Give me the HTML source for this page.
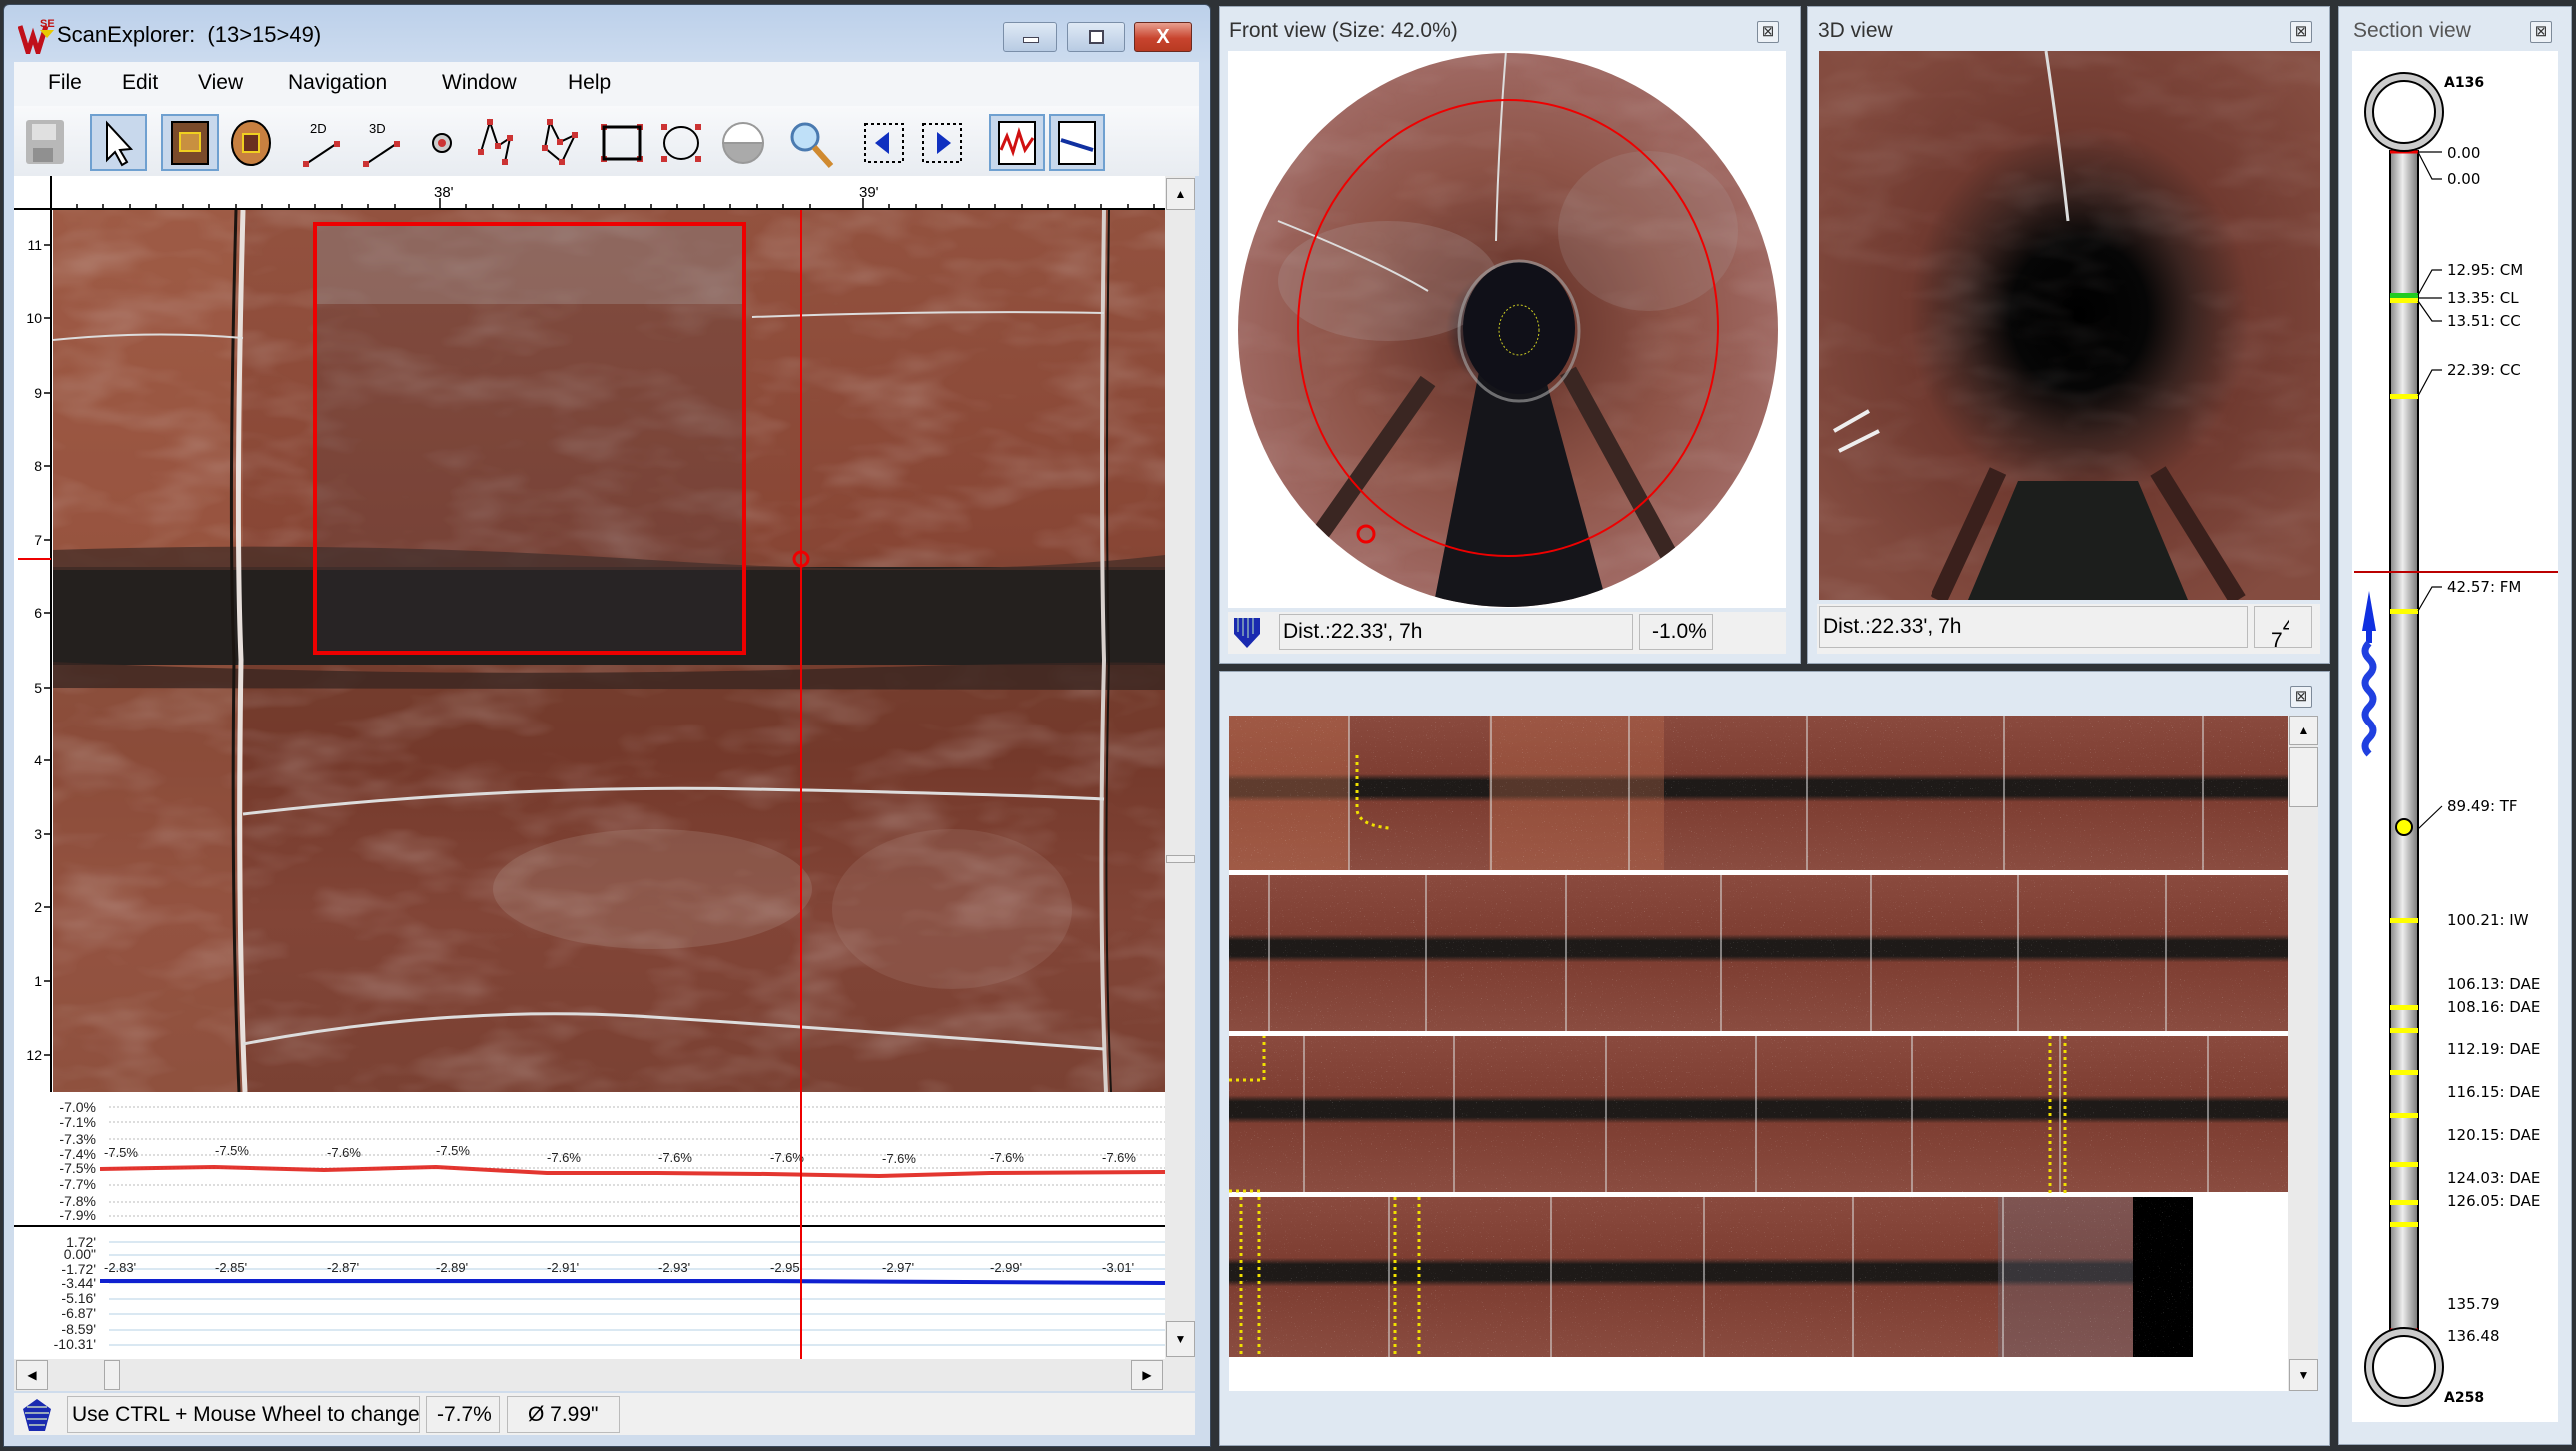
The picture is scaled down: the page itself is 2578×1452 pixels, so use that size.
<!DOCTYPE html>
<html><head><meta charset="utf-8">
<style>
*{margin:0;padding:0;box-sizing:border-box}
body{width:2578px;height:1452px;background:#2e3236;position:relative;overflow:hidden;font-family:"Liberation Sans",sans-serif}
.a{position:absolute}
.t{font-family:"Liberation Sans",sans-serif;color:#000}
.btn{position:absolute;border:1px solid #7a8ea8;border-radius:3px}
.pan{background:#dfe8f2;border:1px solid #9aa8b8}
.x{position:absolute;width:22px;height:22px;border:1px solid #7d8a99;border-radius:2px;background:#eef2f7;font-size:15px;line-height:19px;text-align:center;color:#333}
.sb{position:absolute;background:#f0f0f0;border:1px solid #a8a8a8}
</style></head><body>

<!-- LEFT WINDOW -->
<div class="a" style="left:3px;top:4px;width:1209px;height:1444px;background:linear-gradient(#bcd0ea,#cddcef 60px,#cfdcec);border:1px solid #3b4a5c;border-radius:6px 6px 0 0"></div>
<svg class="a" style="left:18px;top:16px" width="38" height="38" viewBox="0 0 38 38"><path d="M2 10 L10 36 L15 20 L20 36 L28 10" stroke="#c0101a" stroke-width="5" fill="none"/><text x="22" y="11" font-size="11" font-weight="bold" fill="#c01010" font-family="Liberation Sans">SE</text><path d="M22 14 L36 14 L29 22Z" fill="#e8c800"/></svg>
<div class="a t" style="left:57px;top:22px;font-size:22px">ScanExplorer:&nbsp; (13&gt;15&gt;49)</div>
<div class="btn" style="left:1004px;top:22px;width:54px;height:30px;background:linear-gradient(#dfe9f5,#b8cbe3)"><div class="a" style="left:19px;top:14px;width:16px;height:6px;background:#fff;border:1px solid #445"></div></div>
<div class="btn" style="left:1068px;top:22px;width:58px;height:30px;background:linear-gradient(#dfe9f5,#b8cbe3)"><div class="a" style="left:21px;top:7px;width:15px;height:14px;border:2px solid #445;background:#fff"></div></div>
<div class="btn" style="left:1135px;top:22px;width:58px;height:30px;background:linear-gradient(#e8a090,#c8442e 55%,#b83a22);border-color:#6a2a20;color:#fff;font-weight:bold;font-size:20px;text-align:center;line-height:28px">X</div>
<div class="a" style="left:14px;top:62px;width:1186px;height:44px;background:#f3f5f8"></div>
<div class="a t" style="left:48px;top:71px;font-size:21px">File</div>
<div class="a t" style="left:122px;top:71px;font-size:21px">Edit</div>
<div class="a t" style="left:198px;top:71px;font-size:21px">View</div>
<div class="a t" style="left:288px;top:71px;font-size:21px">Navigation</div>
<div class="a t" style="left:442px;top:71px;font-size:21px">Window</div>
<div class="a t" style="left:568px;top:71px;font-size:21px">Help</div>
<div class="a" style="left:14px;top:106px;width:1186px;height:70px;background:linear-gradient(#f8f9fb,#e8ecf1)"></div>
<svg class="a" style="left:14px;top:106px" width="1110" height="70" viewBox="14 106 1110 70">
 <g fill="#c8d8ec" stroke="#6fa0d0" stroke-width="2">
  <rect x="91" y="115" width="55" height="55"/><rect x="162" y="115" width="56" height="55"/>
  <rect x="991" y="115" width="54" height="55"/><rect x="1051" y="115" width="54" height="55"/>
 </g>
 <rect x="26" y="120" width="38" height="44" rx="3" fill="#b8b8b8"/><rect x="32" y="124" width="24" height="16" fill="#e0e0e0"/><rect x="33" y="148" width="20" height="14" fill="#909090"/>
 <path d="M107 123 L107 160 L115 152 L122 165 L127 162 L120 150 L131 149Z" fill="#fff" stroke="#000" stroke-width="2"/>
 <rect x="172" y="122" width="36" height="42" fill="#7a4a2a" stroke="#000" stroke-width="2"/><rect x="180" y="133" width="20" height="18" fill="#c89040" stroke="#f0d020" stroke-width="2"/>
 <ellipse cx="251" cy="143" rx="19" ry="22" fill="#c88040" stroke="#000" stroke-width="2"/><rect x="243" y="134" width="16" height="18" fill="#6a3020" stroke="#f0d020" stroke-width="2"/>
 <text x="310" y="133" font-size="13" font-family="Liberation Sans">2D</text><path d="M306 164 L336 144" stroke="#000" stroke-width="2"/><rect x="303" y="161" width="6" height="6" fill="#c33"/><rect x="334" y="141" width="6" height="6" fill="#c33"/>
 <text x="369" y="133" font-size="13" font-family="Liberation Sans">3D</text><path d="M366 164 L396 144" stroke="#000" stroke-width="2"/><rect x="363" y="161" width="6" height="6" fill="#c33"/><rect x="394" y="141" width="6" height="6" fill="#c33"/>
 <circle cx="442" cy="143" r="9" fill="#ccc" stroke="#000" stroke-width="2"/><circle cx="442" cy="143" r="4" fill="#c33"/>
 <path d="M481 152 L490 122 L498 146 L510 138 L505 162" stroke="#000" stroke-width="2" fill="none"/>
 <path d="M545 148 L550 122 L560 142 L575 135 L562 162Z" stroke="#000" stroke-width="2" fill="none"/>
 <g fill="#c33"><rect x="478" y="149" width="6" height="6"/><rect x="487" y="119" width="6" height="6"/><rect x="495" y="143" width="6" height="6"/><rect x="507" y="135" width="6" height="6"/><rect x="502" y="159" width="6" height="6"/>
 <rect x="542" y="145" width="6" height="6"/><rect x="547" y="119" width="6" height="6"/><rect x="557" y="139" width="6" height="6"/><rect x="572" y="132" width="6" height="6"/><rect x="559" y="159" width="6" height="6"/>
 <rect x="601" y="124" width="6" height="6"/><rect x="637" y="124" width="6" height="6"/><rect x="601" y="156" width="6" height="6"/><rect x="637" y="156" width="6" height="6"/>
 <rect x="662" y="124" width="6" height="6"/><rect x="696" y="124" width="6" height="6"/><rect x="662" y="156" width="6" height="6"/><rect x="696" y="156" width="6" height="6"/></g>
 <rect x="604" y="127" width="36" height="32" stroke="#000" stroke-width="3" fill="none"/>
 <ellipse cx="682" cy="143" rx="17" ry="16" stroke="#000" stroke-width="2" fill="none"/>
 <path d="M724 143 A20 20 0 0 1 764 143Z" fill="#fff" stroke="#999" stroke-width="2"/><path d="M724 143 A20 20 0 0 0 764 143Z" fill="#aaa" stroke="#999" stroke-width="2"/>
 <circle cx="806" cy="137" r="13" fill="#bfe0f8" stroke="#4a7ab0" stroke-width="3"/><path d="M815 147 L832 166" stroke="#d08a30" stroke-width="6"/>
 <rect x="866" y="124" width="38" height="38" stroke="#000" stroke-dasharray="3 3" fill="none" stroke-width="2"/><path d="M890 132 L876 143 L890 154Z" fill="#1030c0"/>
 <rect x="924" y="124" width="38" height="38" stroke="#000" stroke-dasharray="3 3" fill="none" stroke-width="2"/><path d="M938 132 L952 143 L938 154Z" fill="#1030c0"/>
 <rect x="1000" y="122" width="36" height="42" fill="#fff" stroke="#000" stroke-width="2"/><path d="M1002 150 L1008 136 L1014 152 L1020 132 L1026 150 L1034 138" stroke="#d01010" stroke-width="3" fill="none"/>
 <rect x="1060" y="122" width="36" height="42" fill="#fff" stroke="#000" stroke-width="2"/><path d="M1062 140 L1094 150" stroke="#1030a0" stroke-width="4"/>
</svg>
<div class="a" style="left:14px;top:176px;width:1152px;height:34px;background:#fff;border-bottom:2px solid #000"></div>
<svg class="a" style="left:14px;top:176px" width="1152" height="34">
 <line x1="37" y1="0" x2="37" y2="34" stroke="#000" stroke-width="2"/>
 <path d="M63 28v6M89 28v6M116 28v6M142 28v6M169 28v6M195 28v6M222 28v6M248 28v6M275 28v6M301 28v6M328 28v6M354 28v6M381 28v6M426 22v12M452 28v6M479 28v6M505 28v6M532 28v6M558 28v6M585 28v6M611 28v6M638 28v6M664 28v6M691 28v6M717 28v6M744 28v6M770 28v6M797 28v6M850 22v12M876 28v6M903 28v6M929 28v6M956 28v6M982 28v6M1009 28v6M1035 28v6M1062 28v6M1088 28v6M1115 28v6M1141 28v6" stroke="#000" stroke-width="1.5"/>
 <text x="420" y="21" font-size="15" font-family="Liberation Sans">38'</text>
 <text x="846" y="21" font-size="15" font-family="Liberation Sans">39'</text>
</svg>
<div class="a" style="left:1166px;top:176px;width:30px;height:1184px;background:#eaeaea"></div>
<div class="sb" style="left:1167px;top:178px;width:29px;height:32px;font-size:12px;text-align:center;line-height:30px">▲</div>
<div class="sb" style="left:1167px;top:856px;width:29px;height:8px"></div>
<div class="sb" style="left:1167px;top:1322px;width:29px;height:36px;font-size:12px;text-align:center;line-height:34px">▼</div>
<div class="a" style="left:14px;top:210px;width:39px;height:883px;background:#fff"></div>
<svg class="a t" style="left:14px;top:210px" width="39" height="883" font-size="14" font-family="Liberation Sans">
 <line x1="37" y1="0" x2="37" y2="883" stroke="#000" stroke-width="2"/>
 <g text-anchor="end"><text x="28" y="40">11</text><text x="28" y="113">10</text><text x="28" y="188">9</text><text x="28" y="261">8</text><text x="28" y="335">7</text><text x="28" y="408">6</text><text x="28" y="483">5</text><text x="28" y="556">4</text><text x="28" y="630">3</text><text x="28" y="703">2</text><text x="28" y="777">1</text><text x="28" y="851">12</text></g>
 <path d="M30 35h7M30 108h7M30 183h7M30 256h7M30 330h7M30 403h7M30 478h7M30 551h7M30 625h7M30 698h7M30 772h7M30 846h7" stroke="#000" stroke-width="1.5"/>
 <line x1="4" y1="349" x2="37" y2="349" stroke="#e00" stroke-width="2"/>
</svg>
<svg class="a" style="left:53px;top:210px" width="1113" height="883" viewBox="0 0 1113 883">
 <defs>
  <filter id="n" x="0" y="0" width="100%" height="100%"><feTurbulence type="fractalNoise" baseFrequency="0.01 0.025" numOctaves="3" seed="3"/><feColorMatrix values="0 0 0 0 0.7  0 0 0 0 0.6  0 0 0 0 0.58  0 0 0 0.6 -0.28"/><feComposite in2="SourceGraphic" operator="in"/></filter>
  <linearGradient id="lg" x1="0" y1="0" x2="0" y2="1"><stop offset="0" stop-color="#93523f"/><stop offset=".38" stop-color="#884635"/><stop offset=".45" stop-color="#744030"/><stop offset=".62" stop-color="#74392b"/><stop offset=".8" stop-color="#824537"/><stop offset="1" stop-color="#7a4133"/></linearGradient>
 </defs>
 <rect width="1113" height="883" fill="url(#lg)"/>
 <rect x="0" y="0" width="190" height="883" fill="#b06a50" opacity=".4"/>
 <rect width="1113" height="883" filter="url(#n)"/>
 <rect x="0" y="357" width="1113" height="98" fill="#24201e"/>
 <path d="M0 340 Q300 330 600 350 T1113 345 L1113 360 L0 360Z" fill="#4a3028" opacity=".8"/>
 <path d="M0 452 Q400 470 800 458 T1113 460 L1113 480 L0 478Z" fill="#3a2620" opacity=".8"/>
 <path d="M190 0 Q182 300 188 450 Q184 700 192 883" stroke="#e8e0dc" stroke-width="5" fill="none"/>
 <path d="M183 0 Q175 300 181 450 Q178 700 186 883" stroke="#1a1410" stroke-width="3" fill="none"/>
 <path d="M1052 0 Q1048 300 1052 450 Q1046 700 1054 883" stroke="#d8d0cc" stroke-width="4" fill="none"/>
 <path d="M1057 0 Q1053 300 1057 450 Q1051 700 1059 883" stroke="#1a1410" stroke-width="2" fill="none"/>
 <path d="M190 605 Q450 575 700 580 T1052 590" stroke="#ddd" stroke-width="3" fill="none"/>
 <path d="M190 835 Q400 795 600 808 T1052 840" stroke="#ddd" stroke-width="3" fill="none"/>
 <path d="M0 130 Q100 120 190 128" stroke="#ddd" stroke-width="2" fill="none"/>
 <path d="M700 107 Q900 100 1052 103" stroke="#ddd" stroke-width="2" fill="none"/>
 <ellipse cx="600" cy="680" rx="160" ry="60" fill="#c0a8a0" opacity=".2"/>
 <ellipse cx="900" cy="700" rx="120" ry="80" fill="#c0a8a0" opacity=".15"/>
 <rect x="262" y="14" width="430" height="429" fill="#3a3640" opacity=".2"/>
 <rect x="262" y="14" width="430" height="80" fill="#b0a8a8" opacity=".3"/>
 <rect x="262" y="14" width="430" height="429" fill="none" stroke="#e00" stroke-width="4"/>
 <line x1="749" y1="-40" x2="749" y2="883" stroke="#e00" stroke-width="2"/>
 <circle cx="749" cy="349" r="7" fill="none" stroke="#e00" stroke-width="3"/>
</svg>
<div class="a" style="left:14px;top:1093px;width:1152px;height:267px;background:#fff"></div>
<svg class="a" style="left:14px;top:1093px" width="1152" height="267" font-family="Liberation Sans">
 <g stroke="#bbb" stroke-dasharray="2 2" stroke-width="1">
  <path d="M95 15H1152M95 30H1152M95 47H1152M95 63H1152M95 76H1152M95 93H1152M95 110H1152M95 124H1152"/>
 </g>
 <g stroke="#cde0ee" stroke-width="1.5"><path d="M95 150H1152M95 163H1152M95 177H1152M95 191H1152M95 207H1152M95 222H1152M95 238H1152M95 253H1152"/></g>
 <line x1="0" y1="134" x2="1152" y2="134" stroke="#000" stroke-width="2"/>
 <g font-size="14" fill="#222" text-anchor="end">
  <text x="82" y="20">-7.0%</text><text x="82" y="35">-7.1%</text><text x="82" y="52">-7.3%</text><text x="82" y="67">-7.4%</text><text x="82" y="81">-7.5%</text><text x="82" y="97">-7.7%</text><text x="82" y="114">-7.8%</text><text x="82" y="128">-7.9%</text>
  <text x="82" y="155">1.72'</text><text x="82" y="167">0.00"</text><text x="82" y="182">-1.72'</text><text x="82" y="196">-3.44'</text><text x="82" y="211">-5.16'</text><text x="82" y="226">-6.87'</text><text x="82" y="242">-8.59'</text><text x="82" y="257">-10.31'</text>
 </g>
 <path d="M86 77 L200 75 L310 78 L422 75 L533 81 L644 81 L755 82 L866 84 L977 81 L1152 80" stroke="#e0201a" stroke-width="4" fill="none" opacity=".9"/>
 <path d="M86 189 L755 189 L1152 191" stroke="#1020d0" stroke-width="4" fill="none"/>
 <g font-size="13" fill="#222">
  <text x="90" y="65">-7.5%</text><text x="201" y="63">-7.5%</text><text x="313" y="65">-7.6%</text><text x="422" y="63">-7.5%</text><text x="533" y="70">-7.6%</text><text x="645" y="70">-7.6%</text><text x="757" y="70">-7.6%</text><text x="869" y="71">-7.6%</text><text x="977" y="70">-7.6%</text><text x="1089" y="70">-7.6%</text>
  <text x="90" y="180">-2.83'</text><text x="201" y="180">-2.85'</text><text x="313" y="180">-2.87'</text><text x="422" y="180">-2.89'</text><text x="533" y="180">-2.91'</text><text x="645" y="180">-2.93'</text><text x="757" y="180">-2.95'</text><text x="869" y="180">-2.97'</text><text x="977" y="180">-2.99'</text><text x="1089" y="180">-3.01'</text>
 </g>
 <line x1="788" y1="0" x2="788" y2="267" stroke="#e00" stroke-width="2"/>
</svg>
<div class="a" style="left:14px;top:1360px;width:1182px;height:32px;background:#eaeaea"></div>
<div class="sb" style="left:16px;top:1361px;width:32px;height:30px;font-size:12px;text-align:center;line-height:28px">◀</div>
<div class="sb" style="left:104px;top:1361px;width:16px;height:30px"></div>
<div class="sb" style="left:1132px;top:1361px;width:32px;height:30px;font-size:12px;text-align:center;line-height:28px">▶</div>
<div class="a" style="left:14px;top:1394px;width:1182px;height:42px;background:#f0f0f0"></div>
<svg class="a" style="left:19px;top:1398px" width="36" height="36"><path d="M18 2 L32 12 L26 34 L10 34 L4 12Z" fill="#1a2ab0"/><path d="M8 10h20M6 16h24M8 22h20M10 28h16" stroke="#9ab" stroke-width="2"/></svg>
<div class="a t" style="left:67px;top:1397px;width:353px;height:37px;border:1px solid #bbb;font-size:21px;line-height:35px;padding-left:4px;overflow:hidden;white-space:nowrap">Use CTRL + Mouse Wheel to change</div>
<div class="a t" style="left:426px;top:1397px;width:74px;height:37px;border:1px solid #bbb;font-size:21px;line-height:35px;padding-left:10px">-7.7%</div>
<div class="a t" style="left:507px;top:1397px;width:113px;height:37px;border:1px solid #bbb;font-size:21px;line-height:35px;padding-left:20px">Ø 7.99"</div>

<!-- FRONT VIEW -->
<div class="a pan" style="left:1220px;top:6px;width:582px;height:658px"></div>
<div class="a t" style="left:1230px;top:19px;font-size:21px;color:#333">Front view (Size: 42.0%)</div>
<div class="x" style="left:1758px;top:21px">⊠</div>
<div class="a" style="left:1229px;top:51px;width:558px;height:557px;background:#fff"></div>
<svg class="a" style="left:1229px;top:51px" width="558" height="557">
 <defs>
  <radialGradient id="fv" cx=".5" cy=".5" r=".5"><stop offset="0" stop-color="#101018"/><stop offset=".13" stop-color="#202028"/><stop offset=".22" stop-color="#6e3a30"/><stop offset=".6" stop-color="#8e5448"/><stop offset="1" stop-color="#a06a64"/></radialGradient>
  <clipPath id="ec"><ellipse cx="280" cy="279" rx="270" ry="277"/></clipPath>
 </defs>
 <g clip-path="url(#ec)">
  <rect width="558" height="557" fill="url(#fv)"/>
  <rect width="558" height="557" filter="url(#n)" opacity=".6"/>
  <path d="M255 300 L310 300 L380 557 L205 557Z" fill="#15151a"/>
  <path d="M200 330 L40 557 M340 320 L470 557" stroke="#3a2622" stroke-width="18"/>
  <ellipse cx="160" cy="230" rx="110" ry="60" fill="#b0a0a0" opacity=".25"/>
  <ellipse cx="420" cy="180" rx="90" ry="80" fill="#b0a0a0" opacity=".2"/>
  <path d="M278 0 Q270 100 268 190" stroke="#ddd" stroke-width="2" fill="none"/>
  <path d="M50 170 Q150 210 200 240" stroke="#ddd" stroke-width="2" fill="none"/>
 </g>
 <ellipse cx="291" cy="277" rx="56" ry="66" fill="#101018"/>
 <ellipse cx="291" cy="280" rx="60" ry="70" fill="none" stroke="#aaa" stroke-width="3" opacity=".6"/>
 <ellipse cx="291" cy="279" rx="20" ry="25" fill="none" stroke="#cc2" stroke-width="1" stroke-dasharray="2 2"/>
 <ellipse cx="280" cy="277" rx="210" ry="228" fill="none" stroke="#e00" stroke-width="2"/>
 <circle cx="138" cy="483" r="8" fill="none" stroke="#e00" stroke-width="3"/>
</svg>
<div class="a" style="left:1229px;top:612px;width:558px;height:42px;background:#f0f0f0"></div>
<svg class="a" style="left:1233px;top:614px" width="30" height="36"><path d="M2 4 L28 4 L28 20 L15 34 L2 20Z" fill="#1a2ab0"/><path d="M6 4v14M11 4v18M16 4v20M21 4v16" stroke="#8ab" stroke-width="1.5"/></svg>
<div class="a t" style="left:1280px;top:614px;width:354px;height:36px;border:1px solid #bbb;font-size:21px;line-height:34px;padding-left:3px">Dist.:22.33', 7h</div>
<div class="a t" style="left:1640px;top:614px;width:74px;height:36px;border:1px solid #bbb;font-size:21px;line-height:34px;padding-left:12px">-1.0%</div>

<!-- 3D VIEW -->
<div class="a pan" style="left:1808px;top:6px;width:524px;height:658px"></div>
<div class="a t" style="left:1819px;top:19px;font-size:21px;color:#333">3D view</div>
<div class="x" style="left:2292px;top:21px">⊠</div>
<svg class="a" style="left:1820px;top:51px" width="502" height="549">
 <defs><radialGradient id="tv" cx=".52" cy=".48" r=".62"><stop offset="0" stop-color="#000"/><stop offset=".22" stop-color="#060606"/><stop offset=".36" stop-color="#3a2420"/><stop offset=".55" stop-color="#703a30"/><stop offset="1" stop-color="#844c40"/></radialGradient></defs>
 <rect width="502" height="549" fill="url(#tv)"/>
 <rect width="502" height="549" filter="url(#n)" opacity=".5"/>
 <path d="M200 430 L320 430 L370 549 L150 549Z" fill="#1c1e1c"/>
 <path d="M180 420 L120 549 M340 420 L420 549" stroke="#3a201c" stroke-width="18"/>
 <path d="M228 0 Q240 80 250 170" stroke="#ddd" stroke-width="3" fill="none"/>
 <path d="M15 380 L50 360 M20 400 L60 380" stroke="#eee" stroke-width="4"/>
</svg>
<div class="a" style="left:1818px;top:604px;width:504px;height:50px;background:#f0f0f0"></div>
<div class="a t" style="left:1820px;top:606px;width:430px;height:42px;border:1px solid #bbb;font-size:21px;line-height:40px;padding-left:3px">Dist.:22.33', 7h</div>
<div class="a t" style="left:2256px;top:606px;width:58px;height:42px;border:1px solid #bbb;font-size:21px;line-height:40px;padding-left:16px;overflow:hidden">7<span style="display:inline-block;width:6px;overflow:hidden">4</span></div>

<!-- BOTTOM PANEL -->
<div class="a pan" style="left:1220px;top:671px;width:1112px;height:776px"></div>
<div class="x" style="left:2292px;top:686px">⊠</div>
<div class="a" style="left:1230px;top:716px;width:1060px;height:676px;background:#fff"></div>
<svg class="a" style="left:1230px;top:716px" width="1060" height="642">
 <defs>
  <linearGradient id="st" x1="0" y1="0" x2="0" y2="1"><stop offset="0" stop-color="#8a4a3e"/><stop offset=".38" stop-color="#7e3e32"/><stop offset=".42" stop-color="#1e1a18"/><stop offset=".52" stop-color="#1e1a18"/><stop offset=".56" stop-color="#7e3e32"/><stop offset="1" stop-color="#8a4c40"/></linearGradient>
  <filter id="sp" x="0" y="0" width="100%" height="100%"><feTurbulence type="fractalNoise" baseFrequency="0.9" numOctaves="1" seed="5"/><feColorMatrix values="0 0 0 0 1  0 0 0 0 1  0 0 0 0 1  0 0 0 6 -4.2"/></filter>
 </defs>
 <rect x="0" y="0" width="1060" height="155" fill="url(#st)"/>
 <rect x="0" y="160" width="1060" height="156" fill="url(#st)"/>
 <rect x="0" y="321" width="1060" height="156" fill="url(#st)"/>
 <rect x="0" y="482" width="965" height="160" fill="url(#st)"/>
 <rect x="0" y="0" width="120" height="155" fill="#c07050" opacity=".4"/>
 <rect x="260" y="0" width="175" height="155" fill="#c07050" opacity=".35"/>
 <rect x="905" y="482" width="60" height="160" fill="#000"/>
 <rect x="770" y="482" width="135" height="160" fill="#6a6a78" opacity=".35"/>
 <rect width="1060" height="642" filter="url(#sp)" opacity=".5"/>
 <rect x="0" y="155" width="1060" height="5" fill="#fff"/><rect x="0" y="316" width="1060" height="5" fill="#fff"/><rect x="0" y="477" width="1060" height="5" fill="#fff"/>
 <g stroke="#ddd" stroke-width="1.5" opacity=".7">
  <path d="M120 0v155M262 0v155M400 0v155M578 0v155M776 0v155M975 0v155"/>
  <path d="M40 160v156M197 160v156M337 160v156M492 160v156M642 160v156M790 160v156M938 160v156"/>
  <path d="M75 321v156M225 321v156M377 321v156M527 321v156M683 321v156M832 321v156M980 321v156"/>
  <path d="M160 482v160M322 482v160M475 482v160M624 482v160M775 482v160"/>
 </g>
 <g stroke="#f0e000" stroke-width="3" stroke-dasharray="3 4" fill="none">
  <path d="M128 40 V95 Q130 110 160 113"/>
  <path d="M0 365 H35 V321 M0 476 H35"/>
  <path d="M822 321 V480 M837 321 V480"/>
  <path d="M12 482 V642 M30 482 V642 M166 482 V642 M190 482 V642"/>
 </g>
</svg>
<div class="a" style="left:2290px;top:716px;width:30px;height:676px;background:#eaeaea"></div>
<div class="sb" style="left:2291px;top:716px;width:29px;height:30px;font-size:12px;text-align:center;line-height:28px">▲</div>
<div class="sb" style="left:2291px;top:748px;width:29px;height:60px"></div>
<div class="sb" style="left:2291px;top:1360px;width:29px;height:32px;font-size:12px;text-align:center;line-height:30px">▼</div>

<!-- SECTION VIEW -->
<div class="a pan" style="left:2340px;top:6px;width:234px;height:1440px"></div>
<div class="a t" style="left:2355px;top:19px;font-size:21px;color:#555">Section view</div>
<div class="x" style="left:2532px;top:21px">⊠</div>
<div class="a" style="left:2354px;top:51px;width:206px;height:1372px;background:#fff"></div>
<svg class="a" style="left:2354px;top:51px" width="206" height="1372" font-family="DejaVu Sans" font-size="15">
 <defs><linearGradient id="pg" x1="0" x2="1"><stop offset="0" stop-color="#888"/><stop offset=".45" stop-color="#eee"/><stop offset="1" stop-color="#777"/></linearGradient></defs>
 <rect x="38" y="100" width="28" height="1220" fill="url(#pg)" stroke="#000" stroke-width="2"/>
 <line x1="38" y1="101" x2="66" y2="101" stroke="#e00" stroke-width="3"/>
 <line x1="38" y1="1280" x2="66" y2="1280" stroke="#e00" stroke-width="3"/>
 <circle cx="52" cy="61" r="39" fill="#ccc" stroke="#000" stroke-width="2"/><circle cx="52" cy="61" r="31" fill="#fff" stroke="#000" stroke-width="2"/>
 <circle cx="52" cy="1317" r="39" fill="#ccc" stroke="#000" stroke-width="2"/><circle cx="52" cy="1317" r="31" fill="#fff" stroke="#000" stroke-width="2"/>
 <rect x="38" y="242" width="28" height="5" fill="#2c2"/>
 <g fill="#ff0">
  <rect x="38" y="247" width="28" height="5"/><rect x="38" y="343" width="28" height="5"/><rect x="38" y="558" width="28" height="5"/>
  <rect x="38" y="868" width="28" height="5"/><rect x="38" y="955" width="28" height="5"/><rect x="38" y="978" width="28" height="5"/><rect x="38" y="1020" width="28" height="5"/><rect x="38" y="1063" width="28" height="5"/><rect x="38" y="1112" width="28" height="5"/><rect x="38" y="1150" width="28" height="5"/><rect x="38" y="1172" width="28" height="5"/>
 </g>
 <line x1="2" y1="521" x2="206" y2="521" stroke="#b00" stroke-width="2"/>
 <path d="M17 540 L10 580 L24 580Z" fill="#1030e0"/><rect x="14" y="580" width="6" height="12" fill="#1030e0"/>
 <path d="M17 592 q-8 8 0 16 q8 8 0 16 q-8 8 0 16 q8 8 0 16 q-8 8 0 16 q8 8 0 16 q-8 8 0 16" stroke="#2040e0" stroke-width="7" fill="none"/>
 <circle cx="52" cy="777" r="8" fill="#ff0" stroke="#000" stroke-width="2"/>
 <g stroke="#000" stroke-width="1.2" fill="none">
  <path d="M66 101 L90 101 M66 101 L80 128 L90 128"/>
  <path d="M66 244 L80 219 L90 219 M66 247 L90 247 M66 250 L80 270 L90 270"/>
  <path d="M66 345 L80 319 L90 319"/><path d="M66 560 L80 536 L90 536"/><path d="M66 779 L90 756"/>
 </g>
 <g fill="#000">
  <text x="92" y="36" font-weight="bold" font-size="14">A136</text>
  <text x="95" y="107">0.00</text><text x="95" y="133">0.00</text>
  <text x="95" y="224">12.95: CM</text><text x="95" y="252">13.35: CL</text><text x="95" y="275">13.51: CC</text>
  <text x="95" y="324">22.39: CC</text><text x="95" y="541">42.57: FM</text><text x="95" y="761">89.49: TF</text>
  <text x="95" y="875">100.21: IW</text><text x="95" y="939">106.13: DAE</text><text x="95" y="962">108.16: DAE</text>
  <text x="95" y="1004">112.19: DAE</text><text x="95" y="1047">116.15: DAE</text><text x="95" y="1090">120.15: DAE</text>
  <text x="95" y="1133">124.03: DAE</text><text x="95" y="1156">126.05: DAE</text><text x="95" y="1259">135.79</text><text x="95" y="1291">136.48</text>
  <text x="92" y="1352" font-weight="bold" font-size="14">A258</text>
 </g>
</svg>
</body></html>
